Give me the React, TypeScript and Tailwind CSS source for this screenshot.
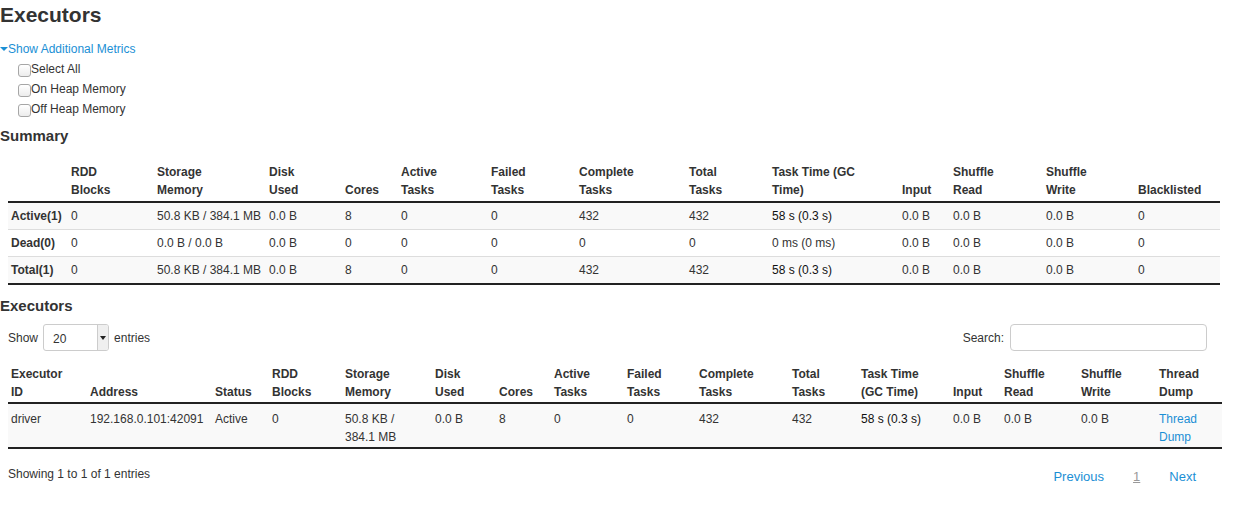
import React from "react";

const summaryCols = [
  { w: 60, label: "" },
  { w: 86, label: "RDD\nBlocks" },
  { w: 112, label: "Storage\nMemory" },
  { w: 76, label: "Disk\nUsed" },
  { w: 56, label: "Cores" },
  { w: 90, label: "Active\nTasks" },
  { w: 88, label: "Failed\nTasks" },
  { w: 110, label: "Complete\nTasks" },
  { w: 83, label: "Total\nTasks" },
  { w: 130, label: "Task Time (GC\nTime)" },
  { w: 51, label: "Input" },
  { w: 93, label: "Shuffle\nRead" },
  { w: 92, label: "Shuffle\nWrite" },
  { w: 85, label: "Blacklisted" },
];

const summaryRows = [
  ["Active(1)", "0", "50.8 KB / 384.1 MB", "0.0 B", "8", "0", "0", "432", "432", "58 s (0.3 s)", "0.0 B", "0.0 B", "0.0 B", "0"],
  ["Dead(0)", "0", "0.0 B / 0.0 B", "0.0 B", "0", "0", "0", "0", "0", "0 ms (0 ms)", "0.0 B", "0.0 B", "0.0 B", "0"],
  ["Total(1)", "0", "50.8 KB / 384.1 MB", "0.0 B", "8", "0", "0", "432", "432", "58 s (0.3 s)", "0.0 B", "0.0 B", "0.0 B", "0"],
];

const execCols = [
  { w: 79, label: "Executor\nID" },
  { w: 125, label: "Address" },
  { w: 57, label: "Status" },
  { w: 73, label: "RDD\nBlocks" },
  { w: 90, label: "Storage\nMemory" },
  { w: 64, label: "Disk\nUsed" },
  { w: 55, label: "Cores" },
  { w: 73, label: "Active\nTasks" },
  { w: 72, label: "Failed\nTasks" },
  { w: 93, label: "Complete\nTasks" },
  { w: 69, label: "Total\nTasks" },
  { w: 92, label: "Task Time\n(GC Time)" },
  { w: 51, label: "Input" },
  { w: 77, label: "Shuffle\nRead" },
  { w: 78, label: "Shuffle\nWrite" },
  { w: 66, label: "Thread\nDump" },
];

const execRow = [
  "driver",
  "192.168.0.101:42091",
  "Active",
  "0",
  "50.8 KB /\n384.1 MB",
  "0.0 B",
  "8",
  "0",
  "0",
  "432",
  "432",
  "58 s (0.3 s)",
  "0.0 B",
  "0.0 B",
  "0.0 B",
];

const Check = ({ label }: { label: string }) => (
  <label className="flex items-end h-5 pl-[18px]">
    <span className="w-[13px] h-[13px] mb-[1px] rounded-[3px] border border-[#a6a6a6] bg-gradient-to-b from-white to-[#ececec]" />
    <span>{label}</span>
  </label>
);

export default function App() {
  return (
    <div
      className="w-[1242px] h-[507px] bg-white text-[#333] text-[12px] leading-[18px] overflow-hidden"
      style={{ fontFamily: '"Liberation Sans", Arial, sans-serif' }}
    >
      <h3 className="text-[21px] font-bold leading-[30px] text-[#333]">Executors</h3>

      <div className="mt-[10px] flex items-center text-[#1b8fd5]">
        <span className="w-0 h-0 border-l-[4px] border-r-[4px] border-t-[4px] border-l-transparent border-r-transparent border-t-[#1b8fd5]" />
        <span>Show Additional Metrics</span>
      </div>
      <div>
        <Check label="Select All" />
        <Check label="On Heap Memory" />
        <Check label="Off Heap Memory" />
      </div>

      <h4 className="text-[15px] font-bold leading-[20px] mt-[8px]">Summary</h4>

      <table className="ml-[8px] mt-[17px] border-collapse table-fixed w-[1212px]">
        <colgroup>
          {summaryCols.map((c, i) => (
            <col key={i} style={{ width: c.w }} />
          ))}
        </colgroup>
        <thead>
          <tr className="border-b-2 border-[#222]">
            {summaryCols.map((c, i) => (
              <th key={i} className="text-left align-bottom font-bold px-[3px] pb-[2px] whitespace-pre-line">
                {c.label}
              </th>
            ))}
          </tr>
        </thead>
        <tbody>
          {summaryRows.map((r, ri) => (
            <tr
              key={ri}
              className={`${ri % 2 === 0 ? "bg-[#f9f9f9]" : "bg-white"} ${ri === summaryRows.length - 1 ? "border-b-2 border-[#222]" : "border-b border-[#ddd]"}`}
            >
              {r.map((v, ci) => (
                <td
                  key={ci}
                  className={`px-[3px] py-[4px] whitespace-nowrap ${ci === 0 ? "font-bold" : ""} ${ci === 9 && ri !== 1 ? "text-[#111]" : ""}`}
                >
                  {v}
                </td>
              ))}
            </tr>
          ))}
        </tbody>
      </table>

      <h4 className="text-[15px] font-bold leading-[20px] mt-[11px]">Executors</h4>

      <div className="flex items-center justify-between mt-[8px] pl-[8px] pr-[35px]">
        <div className="flex items-center">
          <span>Show</span>
          <div className="ml-[5px] w-[66px] h-[27px] border border-[#ccc] rounded-[3px] flex overflow-hidden">
            <span className="flex-1 pl-[9px] pt-[5px] text-[#333]">20</span>
            <span className="w-[11px] bg-[#efefef] border-l border-[#ccc] flex items-center justify-center">
              <span className="w-0 h-0 border-l-[3px] border-r-[3px] border-t-[4px] border-l-transparent border-r-transparent border-t-[#222]" />
            </span>
          </div>
          <span className="ml-[5px]">entries</span>
        </div>
        <div className="flex items-center">
          <span>Search:</span>
          <div className="ml-[6px] w-[197px] h-[27px] border border-[#ccc] rounded-[4px]" />
        </div>
      </div>

      <table className="ml-[8px] mt-[14px] border-collapse table-fixed w-[1214px]">
        <colgroup>
          {execCols.map((c, i) => (
            <col key={i} style={{ width: c.w }} />
          ))}
        </colgroup>
        <thead>
          <tr className="border-b-2 border-[#222]">
            {execCols.map((c, i) => (
              <th key={i} className="text-left align-bottom font-bold px-[3px] pb-[1px] whitespace-pre-line">
                {c.label}
              </th>
            ))}
          </tr>
        </thead>
        <tbody>
          <tr className="bg-[#f9f9f9] border-b-2 border-[#222]">
            {execRow.map((v, i) => (
              <td
                key={i}
                className={`px-[3px] pt-[6px] pb-[1px] align-top whitespace-pre-line ${i === 11 ? "text-[#111] whitespace-nowrap" : ""}`}
              >
                {v}
              </td>
            ))}
            <td className="px-[3px] pt-[6px] pb-[1px] align-top text-[#1b8fd5]">
              Thread
              <br />
              Dump
            </td>
          </tr>
        </tbody>
      </table>

      <div className="flex items-center justify-between mt-[13px] pl-[8px] pr-[46px]">
        <span>Showing 1 to 1 of 1 entries</span>
        <div className="flex items-center mt-[6px] text-[13px] text-[#1b8fd5]">
          <span>Previous</span>
          <span className="ml-[29px] text-[#999] underline">1</span>
          <span className="ml-[29px]">Next</span>
        </div>
      </div>
    </div>
  );
}
